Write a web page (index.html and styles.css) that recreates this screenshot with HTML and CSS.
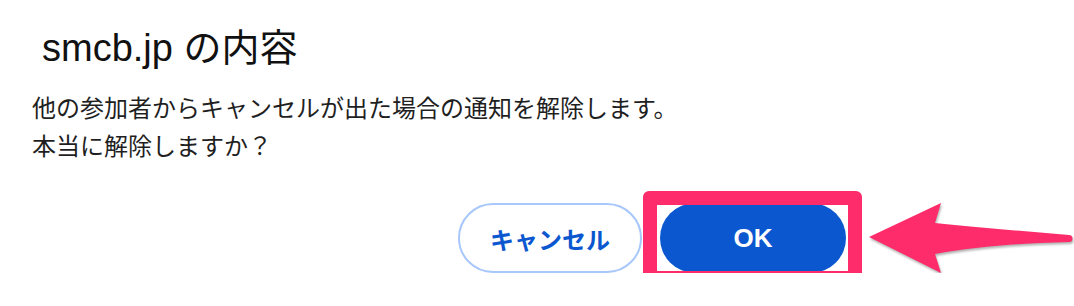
FILE: index.html
```html
<!DOCTYPE html>
<html lang="ja">
<head>
  <meta charset="utf-8">
  <title>smcb.jp の内容</title>
  <link rel="stylesheet" href="styles.css">
</head>
<body>
  <div class="dialog">
    <h1 class="dialog-title">smcb.jp の内容</h1>

    <!-- メッセージ本文 -->
    <p class="dialog-message">
      他の参加者からキャンセルが出た場合の通知を解除します。<br>
      本当に解除しますか？
    </p>

    <!-- ボタン -->
    <div class="dialog-actions">
      <button class="btn btn-cancel" type="button">キャンセル</button>
      <div class="ok-wrap">
        <button class="btn btn-ok" type="button">OK</button>
        <!-- 注釈：赤枠と矢印 -->
        <div class="highlight-frame"></div>
        <svg class="highlight-arrow" width="214" height="90" viewBox="0 0 214 90">
          <path d="M9 42 L81 8 L75 28 C113 32 163 36 209 40 A3.5 3.5 0 0 1 209 47 C163 48 113 52 75 59 L81 78 Z" fill="#fe2c6a"/>
        </svg>
      </div>
    </div>
  </div>
</body>
</html>
```

FILE: styles.css
```css
/* ページ全体 */
body {
  margin: 0;
  background-color: #fff;
  font-family: "Liberation Sans", "Noto Sans CJK JP", sans-serif;
  color: #1f1f1f;
}

/* ダイアログ本体 */
.dialog {
  width: 814px;
  padding: 26px 0 0 32px;
}

/* タイトル */
.dialog-title {
  margin: 0;
  padding-left: 10px;
  font-size: 38px;
  line-height: 44px;
  font-weight: normal;
  color: #111;
}

/* 本文 */
.dialog-message {
  margin: 18px 0 0;
  font-family: "Noto Sans CJK JP", sans-serif;
  font-size: 24px;
  line-height: 38px;
}

/* ボタン行 */
.dialog-actions {
  display: flex;
  justify-content: flex-end;
  gap: 18px;
  margin-top: 39px;
}

.btn {
  height: 70px;
  border-radius: 35px;
  font-family: "Noto Sans CJK JP", sans-serif;
  font-size: 24px;
  font-weight: bold;
  cursor: pointer;
}

.btn-cancel {
  width: 184px;
  background: #fff;
  border: 2px solid #a8c7fa;
  color: #0b57d0;
}

.btn-ok {
  display: block;
  width: 186px;
  background: #0b57d0;
  border: none;
  color: #fff;
  font-family: "Liberation Sans", sans-serif;
  font-size: 26px;
}

/* OKボタンを囲む注釈 */
.ok-wrap {
  position: relative;
}

.highlight-frame {
  position: absolute;
  left: -17px;
  right: -16px;
  top: -12px;
  bottom: -12px;
  border: 14px solid #fe2c6a;
  border-radius: 6px;
  pointer-events: none;
}

.highlight-arrow {
  position: absolute;
  left: 200px;
  top: -8px;
  filter: drop-shadow(1px 2px 1px rgba(0, 0, 0, 0.3));
}
```
